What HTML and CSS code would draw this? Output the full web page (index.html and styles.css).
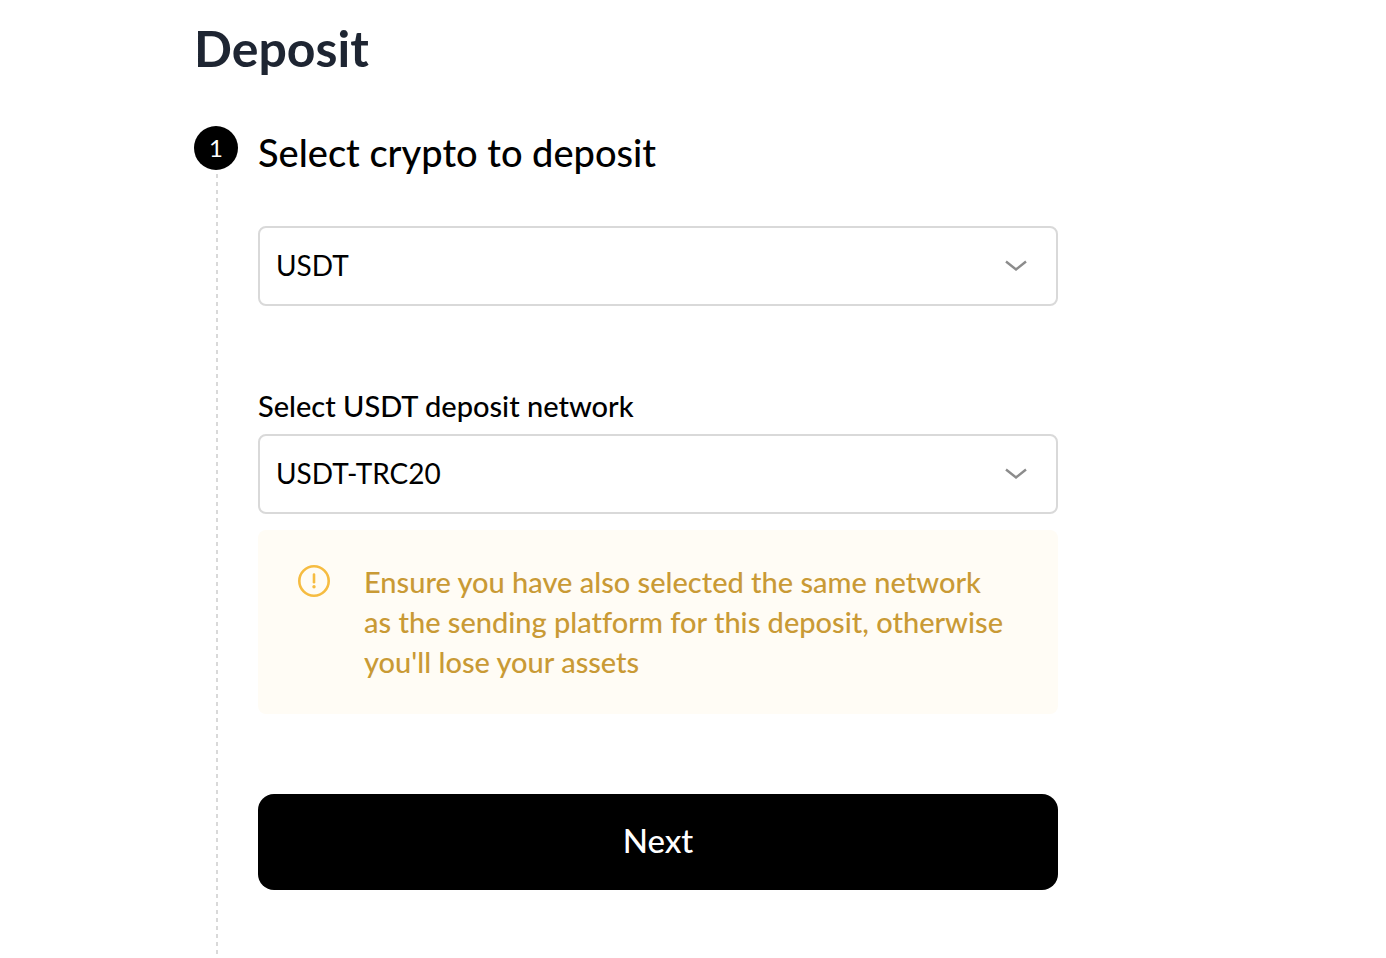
FILE: index.html
```
<!DOCTYPE html>
<html lang="en">
<head>
  <meta charset="UTF-8" />
  <meta name="viewport" content="width=device-width, initial-scale=1.0"/>
  <title>Deposit</title>
  <link rel="stylesheet" href="styles.css">
</head>
<body>
  <main class="deposit">
    <h1>Deposit</h1>

    <section class="step">
      <div class="step-marker">
        <span class="step-number">1</span>
        <span class="step-line"></span>
      </div>

      <form class="step-content">
        <h2 id="crypto-title">Select crypto to deposit</h2>
        <div class="select-box">
          <select id="crypto" aria-labelledby="crypto-title">
            <option>USDT</option>
          </select>
          <svg class="arrow" viewBox="0 0 24 12" aria-hidden="true">
            <path d="M2 1.5L12 9.5L22 1.5" />
          </svg>
        </div>

        <label for="network">Select USDT deposit network</label>
        <div class="select-box">
          <select id="network">
            <option>USDT-TRC20</option>
          </select>
          <svg class="arrow" viewBox="0 0 24 12" aria-hidden="true">
            <path d="M2 1.5L12 9.5L22 1.5" />
          </svg>
        </div>

        <div class="notice">
          <svg class="notice-icon" viewBox="0 0 32 32" aria-hidden="true">
            <circle cx="16" cy="16" r="14.7" />
            <path d="M16 9.5V17.2" />
            <circle class="dot" cx="16" cy="21.7" r="1.7" />
          </svg>
          <p>Ensure you have also selected the same network as the sending platform for this deposit, otherwise you'll lose your assets</p>
        </div>

        <button type="button" class="next">Next</button>
      </form>
    </section>
  </main>
</body>
</html>
```
FILE: styles.css
```
* {
  box-sizing: border-box;
}

body {
  margin: 0;
  background: #fff;
  color: #000;
  font-family: Lato, "Open Sans", sans-serif;
  font-variant-ligatures: none;
}

.deposit {
  display: flex;
  flex-direction: column;
  max-width: 998px;
  min-height: 100vh;
  margin: 0 auto;
  padding: 18px 0 4px;
}

h1 {
  margin: 0 0 48px;
  color: #1e2532;
  font-size: 50px;
  font-weight: 700;
  line-height: 60px;
}

.step {
  display: flex;
  flex: 1;
  gap: 20px;
}

.step-marker {
  display: flex;
  flex-direction: column;
  align-items: center;
  width: 44px;
}

.step-number {
  width: 44px;
  height: 44px;
  border-radius: 50%;
  background: #000;
  color: #fff;
  font-size: 24px;
  line-height: 44px;
  text-align: center;
}

.step-line {
  flex: 1;
  width: 2px;
  margin: 4px 0 0 2px;
  background: repeating-linear-gradient(#d9d9d9 0 4px, transparent 4px 8px);
}

.step-content {
  flex: 1;
  max-width: 800px;
}

h2 {
  margin: 2px 0 50px;
  font-size: 38px;
  font-weight: 500;
  line-height: 48px;
}

.select-box {
  position: relative;
}

select {
  display: block;
  width: 100%;
  height: 80px;
  padding: 0 60px 2px 16px;
  border: 2px solid #d9d9d9;
  border-radius: 8px;
  background: #fff;
  color: #000;
  font-family: inherit;
  font-size: 28px;
  appearance: none;
}

.arrow {
  position: absolute;
  top: 34px;
  right: 30px;
  width: 24px;
  height: 12px;
  fill: none;
  stroke: #8c8c8c;
  stroke-width: 2.4;
  pointer-events: none;
}

label {
  display: block;
  margin: 80px 0 8px;
  font-size: 29px;
  font-weight: 500;
  line-height: 40px;
}

.notice {
  display: flex;
  gap: 34px;
  margin: 16px 0 80px;
  padding: 32px 46px 32px 40px;
  border-radius: 8px;
  background: #fffcf5;
  color: #c99a35;
}

.notice p {
  margin: 0;
  font-size: 29px;
  font-weight: 500;
  line-height: 40px;
}

.notice-icon {
  flex: none;
  width: 32px;
  height: 32px;
  margin-top: 3px;
  fill: none;
  stroke: #f6bc41;
  stroke-width: 2.6;
  stroke-linecap: round;
}

.notice-icon .dot {
  fill: #f6bc41;
  stroke: none;
}

.next {
  display: block;
  width: 100%;
  height: 96px;
  padding: 0 0 4px;
  border: none;
  border-radius: 16px;
  background: #000;
  color: #fff;
  font-family: inherit;
  font-size: 33px;
  font-weight: 500;
  cursor: pointer;
}
```
